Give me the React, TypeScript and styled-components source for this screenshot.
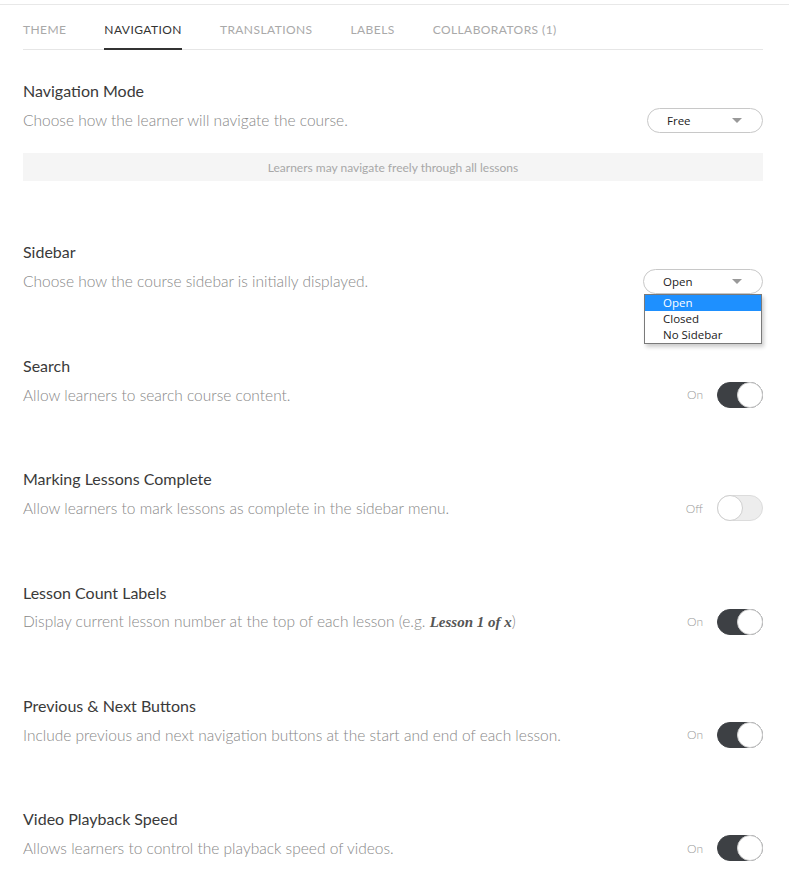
import { FC, ReactNode } from 'react'

import { createGlobalStyle, styled } from 'styled-components'

const GlobalStyle = createGlobalStyle`
  html, body {
    margin: 0;
    padding: 0;
    background: #fff;
  }

  body {
    font-family: Lato, 'Open Sans', sans-serif;
    color: #333;
  }
`

const tabs = ['Theme', 'Navigation', 'Translations', 'Labels', 'Collaborators (1)']

type SettingProps = {
  title: string
  children: ReactNode
  control: ReactNode
  extra?: ReactNode
  first?: boolean
}

const Setting: FC<SettingProps> = ({ title, children, control, extra, first }) => (
  <StyledSection $first={first}>
    <StyledTitle>{title}</StyledTitle>
    <StyledRow>
      <StyledDesc>{children}</StyledDesc>
      {control}
    </StyledRow>
    {extra}
  </StyledSection>
)

const Toggle: FC<{ on: boolean }> = ({ on }) => (
  <StyledToggleWrap>
    <StyledToggleLabel>{on ? 'On' : 'Off'}</StyledToggleLabel>
    <StyledTrack $on={on}>
      <StyledKnob $on={on} />
    </StyledTrack>
  </StyledToggleWrap>
)

const Select: FC<{ value: string; width: number; options?: string[] }> = ({
  value,
  width,
  options,
}) => (
  <StyledSelect $width={width}>
    <StyledSelectValue>{value}</StyledSelectValue>
    <StyledCaret />
    {options && (
      <StyledList>
        {options.map((option) => (
          <StyledOption key={option} $active={option === value}>
            {option}
          </StyledOption>
        ))}
      </StyledList>
    )}
  </StyledSelect>
)

export default function App() {
  return (
    <>
      <GlobalStyle />
      <StyledPage>
        <StyledTabs>
          {tabs.map((tab) => (
            <StyledTab key={tab} $active={tab === 'Navigation'}>
              {tab}
            </StyledTab>
          ))}
        </StyledTabs>

        <Setting
          first
          title="Navigation Mode"
          control={<Select value="Free" width={116} />}
          extra={
            <StyledInfo>Learners may navigate freely through all lessons</StyledInfo>
          }
        >
          Choose how the learner will navigate the course.
        </Setting>

        <Setting
          title="Sidebar"
          control={
            <Select
              value="Open"
              width={120}
              options={['Open', 'Closed', 'No Sidebar']}
            />
          }
        >
          Choose how the course sidebar is initially displayed.
        </Setting>

        <Setting title="Search" control={<Toggle on />}>
          Allow learners to search course content.
        </Setting>

        <Setting title="Marking Lessons Complete" control={<Toggle on={false} />}>
          Allow learners to mark lessons as complete in the sidebar menu.
        </Setting>

        <Setting title="Lesson Count Labels" control={<Toggle on />}>
          Display current lesson number at the top of each lesson (e.g.{' '}
          <StyledExample>Lesson 1 of x</StyledExample>)
        </Setting>

        <Setting title="Previous & Next Buttons" control={<Toggle on />}>
          Include previous and next navigation buttons at the start and end of
          each lesson.
        </Setting>

        <Setting title="Video Playback Speed" control={<Toggle on />}>
          Allows learners to control the playback speed of videos.
        </Setting>
      </StyledPage>
    </>
  )
}

const StyledPage = styled.div`
  margin-top: 4px;
  border-top: 1px solid #e8e8e8;
  padding: 0 26px 0 23px;
`

const StyledTabs = styled.nav`
  display: flex;
  gap: 38px;
  margin-top: 11px;
  border-bottom: 1px solid #e6e6e6;
`

const StyledTab = styled.div<{ $active?: boolean }>`
  padding: 7px 0 11px;
  font-size: 12px;
  line-height: 14px;
  letter-spacing: 0.42px;
  text-transform: uppercase;
  color: ${({ $active }) => ($active ? '#333' : '#a9a9a9')};
  border-bottom: 2px solid ${({ $active }) => ($active ? '#333' : 'transparent')};
  margin-bottom: -1px;
`

const StyledSection = styled.section<{ $first?: boolean }>`
  padding-top: ${({ $first }) => ($first ? '31px' : '0')};
  padding-bottom: 61.4px;
`

const StyledTitle = styled.h3`
  margin: 0 0 6px;
  font-size: 16px;
  line-height: 20px;
  font-weight: 400;
  color: #3a3a3a;
`

const StyledRow = styled.div`
  display: flex;
  align-items: center;
  justify-content: space-between;
  min-height: 26px;
`

const StyledDesc = styled.p`
  margin: 0;
  font-size: 15.5px;
  line-height: 20px;
  font-weight: 300;
  color: #888;
`

const StyledExample = styled.em`
  font-family: 'Liberation Serif', 'DejaVu Serif', serif;
  font-weight: 700;
  font-size: 15px;
  color: #555;
`

const StyledInfo = styled.div`
  margin-top: 20px;
  height: 28px;
  background: #f5f5f5;
  display: flex;
  align-items: center;
  justify-content: center;
  font-size: 12px;
  color: #a8a8a8;
`

const StyledSelect = styled.div<{ $width: number }>`
  position: relative;
  box-sizing: border-box;
  width: ${({ $width }) => $width}px;
  height: 25px;
  border: 1px solid #c8c8c8;
  border-radius: 13px;
  display: flex;
  align-items: center;
  padding: 0 20px 0 19px;
  font-family: 'Open Sans', sans-serif;
  font-size: 11.5px;
  color: #222;
`

const StyledSelectValue = styled.span`
  flex: 1;
`

const StyledCaret = styled.span`
  width: 0;
  height: 0;
  border-left: 5px solid transparent;
  border-right: 5px solid transparent;
  border-top: 5px solid #999;
`

const StyledList = styled.ul`
  position: absolute;
  top: 24px;
  left: 0;
  right: 0;
  margin: 0;
  padding: 0;
  list-style: none;
  background: #fff;
  border: 1px solid #7a7a7a;
  box-shadow: 2px 3px 4px rgba(0, 0, 0, 0.2);
  z-index: 2;
`

const StyledOption = styled.li<{ $active?: boolean }>`
  height: 16px;
  line-height: 16px;
  padding-left: 18px;
  background: ${({ $active }) => ($active ? '#1e90ff' : '#fff')};
  color: ${({ $active }) => ($active ? '#fff' : '#222')};
`

const StyledToggleWrap = styled.div`
  display: flex;
  align-items: center;
  gap: 14px;
`

const StyledToggleLabel = styled.span`
  font-size: 12px;
  font-weight: 300;
  color: #9a9a9a;
`

const StyledTrack = styled.div<{ $on: boolean }>`
  position: relative;
  box-sizing: border-box;
  width: 46px;
  height: 26px;
  border-radius: 13px;
  background: ${({ $on }) => ($on ? '#3d4044' : '#ededed')};
  border: 1px solid ${({ $on }) => ($on ? '#3d4044' : '#dcdcdc')};
`

const StyledKnob = styled.span<{ $on: boolean }>`
  position: absolute;
  top: -1px;
  ${({ $on }) => ($on ? 'right: -1px;' : 'left: -1px;')}
  box-sizing: border-box;
  width: 26px;
  height: 26px;
  border-radius: 50%;
  background: #fff;
  border: 1px solid #cfcfcf;
`
